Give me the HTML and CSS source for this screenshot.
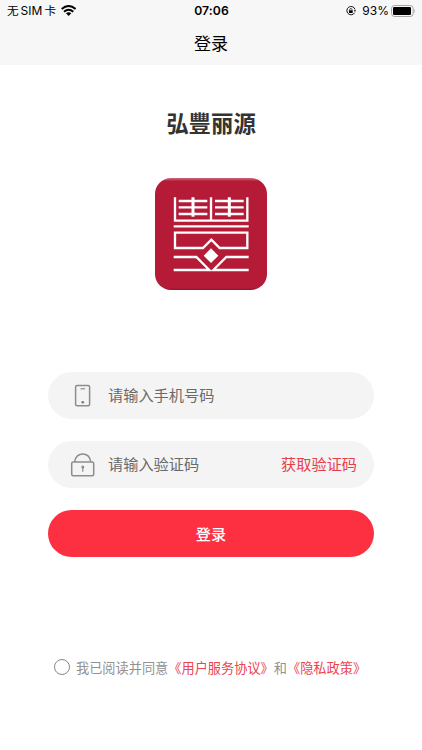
FILE: index.html
```html
<!DOCTYPE html>
<html lang="zh-CN">
<head>
<meta charset="utf-8">
<title>登录</title>
<link rel="stylesheet" href="styles.css">
</head>
<body>
<header class="top">
  <div class="status">
    <div class="status-left">
      <span class="carrier">无<span class="sim">SIM</span>卡</span>
      <svg class="wifi" viewBox="0 0 46 34" width="15.3" height="11.3">
        <g fill="none" stroke="#000" stroke-width="5.8"><path d="M2 12Q23-6 44 12"/><path d="M9 20Q23 8 37 20"/></g>
        <path d="M15 25Q23 18 31 25L23 33Z"/>
      </svg>
    </div>
    <time class="clock">07:06</time>
    <div class="status-right">
      <svg class="lock-rot" viewBox="0 0 30 30" width="10" height="10">
        <path d="M27 10A12.500 12.500 0 1 0 26 20" fill="none" stroke="#000" stroke-width="2.800"/>
        <path d="M23 13h7l-3 5z"/>
        <rect x="9" y="13" width="11" height="8"/>
        <path d="M11 14v-3a3.500 3.500 0 0 1 7 0v3" fill="none" stroke="#000" stroke-width="2"/>
      </svg>
      <span class="percent">93%</span>
      <svg class="battery" viewBox="0 0 75 36" width="25" height="12">
        <rect x="1.500" y="1.500" width="65" height="33" rx="9" fill="#f7f7f7" stroke="#a5a5a5" stroke-width="3"/>
        <rect x="6" y="6" width="54" height="24" rx="4"/>
        <path d="M70 12q5 6 0 12z" fill="#a5a5a5"/>
      </svg>
    </div>
  </div>
  <h1 class="nav-title">登录</h1>
</header>
<main class="login">
  <h2 class="brand">弘豐丽源</h2>
  <svg class="logo" viewBox="22 22 336 336" width="112" height="112">
    <defs><linearGradient id="edge" x1="0" y1="0" x2="0" y2="1"><stop offset="0" stop-color="#d06a7c"/><stop offset=".03" stop-color="#b51a36"/><stop offset=".98" stop-color="#b51a36"/><stop offset="1" stop-color="#93142b"/></linearGradient></defs>
    <rect x="22" y="22" width="336" height="336" rx="48" fill="url(#edge)"/>
    <g fill="none" stroke="#fff" stroke-width="7">
      <path d="M82 80V150H299V80M190 80V150"/>
      <path d="M93 91H179M93 110H179M93 130H179M202 91H288M202 110H288M202 130H288"/>
      <path d="M136 80V138M245 80V138" stroke-width="9"/>
      <path d="M78 167H303"/>
      <path d="M166 232H82V186H299V232H216L191 207Z"/>
      <path d="M78 259H146L185 298H78M303 259H236L197 298H303"/>
    </g>
    <path d="M190 233L212 255L190 277L168 255Z" fill="#fff"/>
  </svg>
  <form class="form">
    <label class="field">
      <svg class="icon" viewBox="0 0 26 26" width="26" height="26" fill="none" stroke="#8d8d8d" stroke-width="1.500">
        <rect x="5.600" y="2.500" width="14" height="20.300" rx="1.500"/><path d="M10.500 5.800h4.500" stroke-width="1.200"/><circle cx="12.800" cy="19.300" r="1.300" fill="#777" stroke="none"/>
      </svg>
      <span class="hint">请输入手机号码</span>
    </label>
    <label class="field">
      <svg class="icon" viewBox="0 0 26 26" width="26" height="26" fill="none" stroke="#8d8d8d" stroke-width="1.500">
        <rect x="1.700" y="10" width="22" height="13.800" rx="1.500"/><path d="M4.700 10C5.500-.800 20-.800 20.700 10"/><circle cx="12.800" cy="15" r="1.500" fill="#8d8d8d" stroke="none"/><path d="M12.800 15.500v4.200" stroke-width="1.200"/>
      </svg>
      <span class="hint">请输入验证码</span>
      <span class="get-code">获取验证码</span>
    </label>
    <button class="submit" type="button">登录</button>
  </form>
  <div class="agreement"><span class="radio"></span><span>我已阅读并同意<a>《用户服务协议》</a>和<a>《隐私政策》</a></span></div>
</main>
</body>
</html>
```
FILE: styles.css
```css
* { box-sizing: border-box; }
body {
  margin: 0;
  height: 750px;
  overflow: hidden;
  background: #fff;
  color: #000;
  font-family: "Noto Sans CJK SC", sans-serif;
}
.top { height: 65px; background: #f7f7f7; }
.status {
  display: grid;
  grid-template-columns: 1fr auto 1fr;
  align-items: center;
  height: 22px;
  padding: 0 6px 0 7px;
  font: 12.5px/22px Inter, "Noto Sans CJK SC", sans-serif;
}
.status-left, .status-right { display: flex; align-items: center; }
.status-left { gap: 5px; }
.carrier { font-size: 11.6px; white-space: nowrap; }
.sim { margin: 0 2px; font-size: 12px; }
.wifi { margin-top: -1px; }
.clock { font-size: 12.2px; font-weight: 600; letter-spacing: .1px; }
.status-right { justify-content: flex-end; }
.percent { margin: 0 2px 0 6px; font-size: 12px; }
.nav-title {
  margin: 0;
  font-size: 17px;
  font-weight: 400;
  line-height: 41px;
  text-align: center;
}
.login { display: flex; flex-direction: column; align-items: center; padding: 0 48px; }
.brand {
  margin: 39px 0 0;
  height: 36px;
  color: #333;
  font-size: 22.4px;
  font-weight: 700;
  line-height: 36px;
}
.logo { display: block; margin-top: 38px; }
.form { width: 100%; margin-top: 82px; }
.field {
  display: flex;
  align-items: center;
  height: 47px;
  margin-bottom: 22px;
  padding: 0 17px 0 22px;
  border-radius: 24px;
  background: #f4f4f4;
  font-size: 15.2px;
}
.icon { margin-right: 12px; }
.hint, .get-code { padding-bottom: 4px; }
.hint { color: #6a6a6a; }
.get-code { margin-left: auto; color: #ea3d4a; }
.submit {
  display: block;
  width: 100%;
  height: 47px;
  padding: 0 0 2px;
  border: 0;
  border-radius: 24px;
  background: #fd3041;
  color: #fff;
  font: 500 15.2px/44px "Noto Sans CJK SC", sans-serif;
}
.agreement {
  display: flex;
  align-items: center;
  gap: 6px;
  width: 100%;
  height: 24px;
  margin-top: 98px;
  padding-left: 6px;
  color: #929292;
  font-size: 13.2px;
  white-space: nowrap;
}
.agreement a { color: #eb4350; }
.radio { width: 16px; height: 16px; border: 1px solid #888; border-radius: 50%; }
```
